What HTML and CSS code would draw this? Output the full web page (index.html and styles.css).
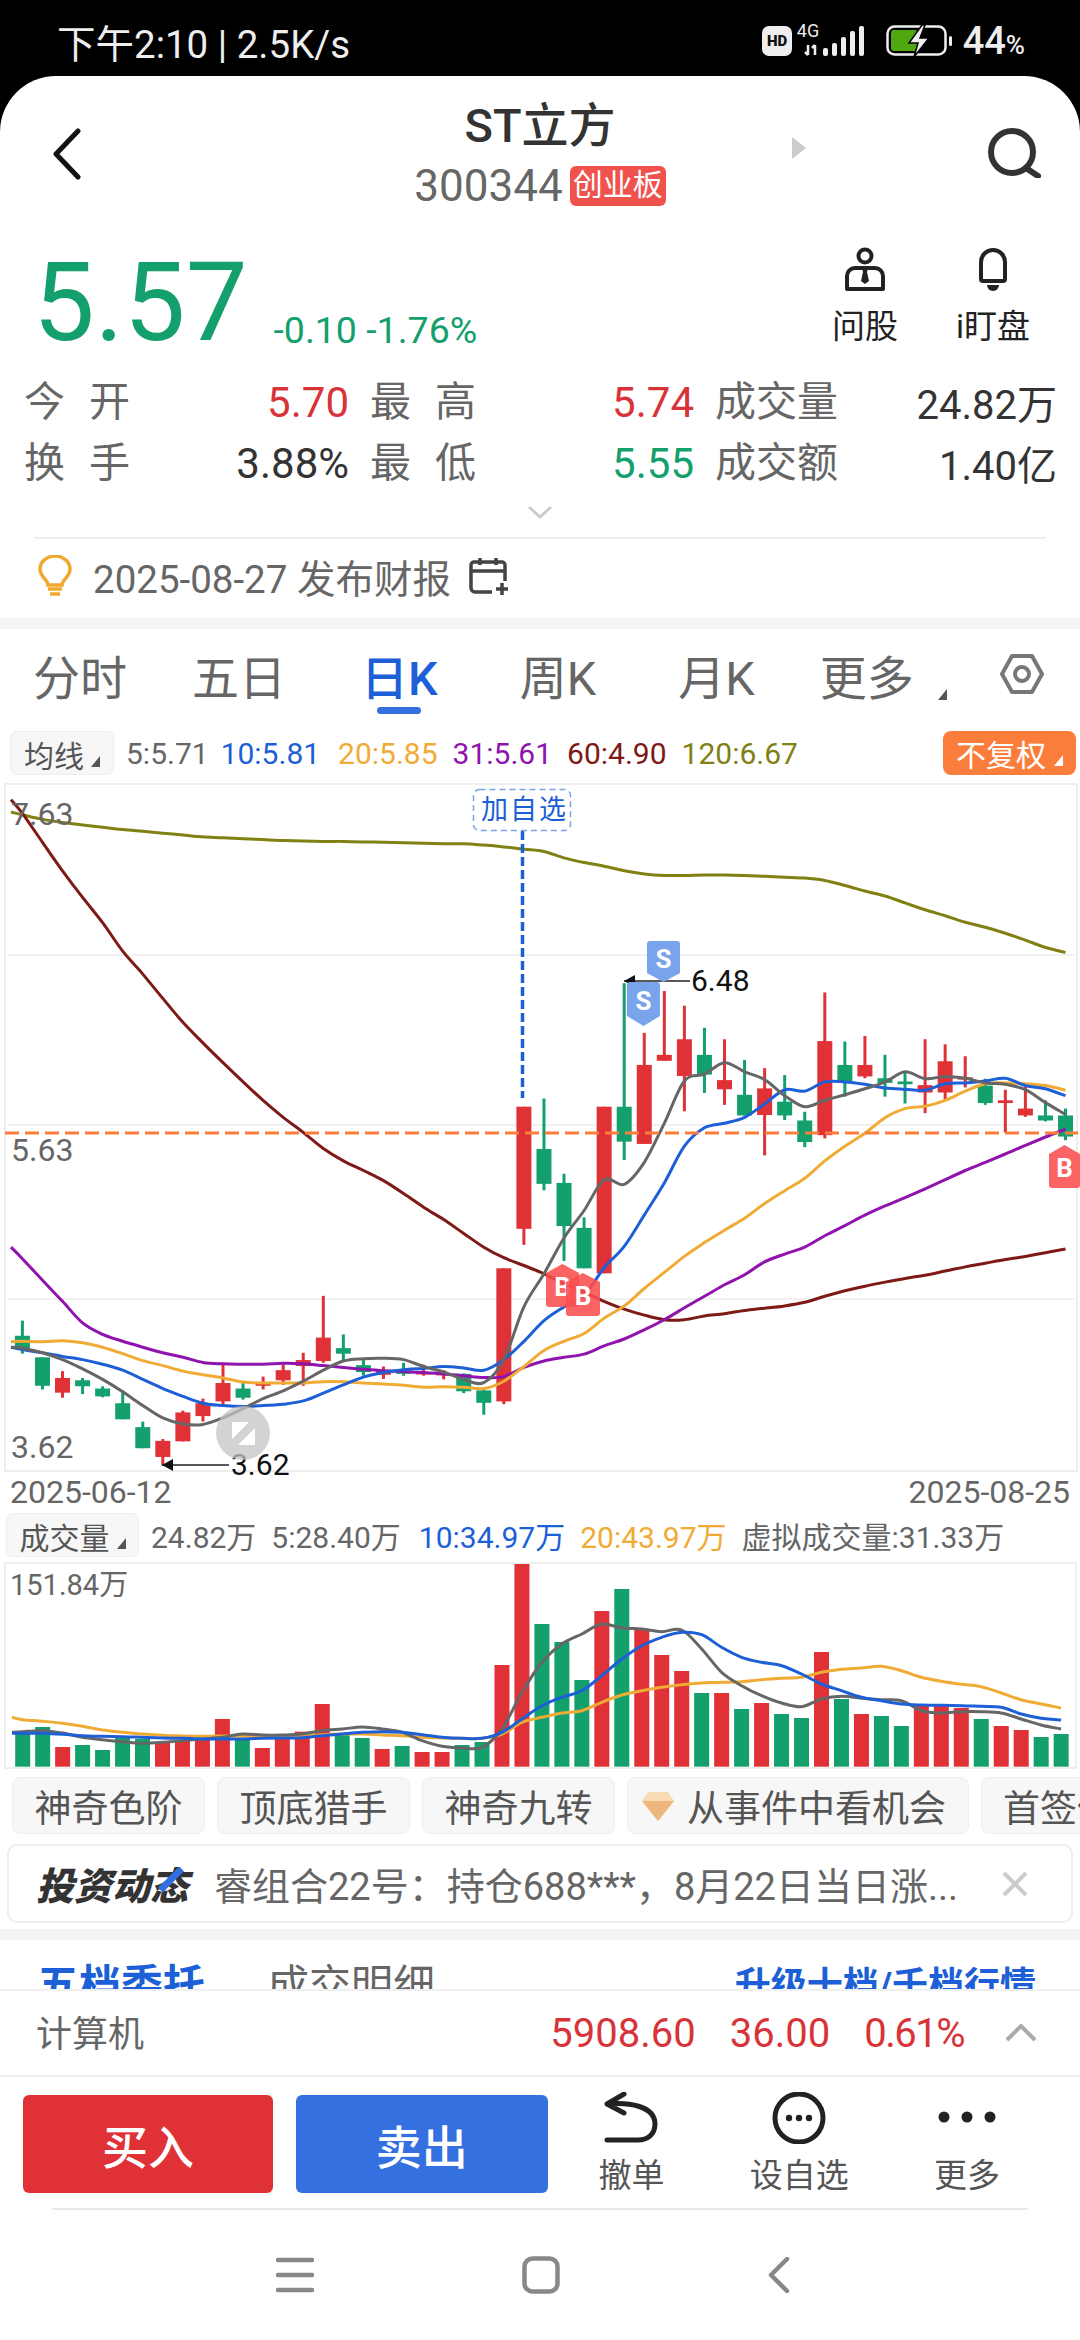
FILE: index.html
```html
<!DOCTYPE html>
<html lang="zh-CN">
<head>
    <meta charset="UTF-8">
    <meta name="viewport" content="width=device-width, initial-scale=1.0">
    <title>ST立方 300344</title>
    <link rel="stylesheet" href="styles.css">
</head>
<body>
<div class="phone">
    <!-- status bar -->
    <div class="status">
        <span class="status-time">下午2:10 | 2.5K/s</span>
        <div class="status-icons">
            <svg class="ic-net" viewBox="0 0 110 40" width="110" height="40">
                <rect x="0" y="5" width="30" height="30" rx="7" class="s-fill"/>
                <text x="15" y="25" class="hd">HD</text>
                <text x="46" y="16" class="g4">4G</text>
                <path d="M46 24v10M43 31l3 3M53 34V24M50 27l3-3" class="s-line"/>
                <rect x="61" y="27" width="5" height="8" rx="2" class="s-fill"/>
                <rect x="70" y="22" width="5" height="13" rx="2" class="s-fill"/>
                <rect x="79" y="16" width="5" height="19" rx="2" class="s-fill"/>
                <rect x="88" y="10" width="5" height="25" rx="2" class="s-fill"/>
                <rect x="97" y="5" width="5" height="30" rx="2" class="s-fill"/>
            </svg>
            <svg class="ic-batt" viewBox="0 0 68 32" width="68" height="32">
                <rect x="1.5" y="1.5" width="58" height="28" rx="7" class="s-line"/>
                <rect x="5" y="5" width="27" height="21" rx="3" class="batt-fill"/>
                <rect x="63" y="11" width="3" height="10" rx="1.5" class="s-fill"/>
                <path d="M36 0L23 18h9l-4 14 15-19h-9l5-13z" class="batt-bolt"/>
            </svg>
            <span class="status-pct">44<small>%</small></span>
        </div>
    </div>

    <div class="sheet">
        <!-- title -->
        <div class="topbar">
            <div class="top-left">
                <svg viewBox="0 0 29 52" width="29" height="52"><path d="M26 3L4 26l22 23" class="ic-back"/></svg>
            </div>
            <div class="top-mid">
                <div class="stock-name">ST立方</div>
                <div class="stock-code"><span>300344</span><em class="board">创业板</em></div>
            </div>
            <div class="top-right">
                <i class="tri-next"></i>
                <svg viewBox="0 0 56 50" width="56" height="50"><circle cx="26" cy="24" r="21" class="ic-search"/><path d="M40 40l12 8" class="ic-search"/></svg>
            </div>
        </div>

        <!-- price -->
        <div class="quote">
            <div class="price">5.57</div>
            <div class="change">-0.10 -1.76%</div>
            <div class="quote-act first">
                <svg viewBox="0 0 42 44" width="42" height="44">
                    <circle cx="21" cy="9" r="6.5" class="ic-dark"/>
                    <path d="M3 42V29a8 8 0 0 1 8-8h20a8 8 0 0 1 8 8v13z" class="ic-dark"/>
                    <path d="M18 21h6l-1 4 2 9-4 3-4-3 2-9z" class="ic-solid"/>
                </svg>
                <span>问股</span>
            </div>
            <div class="quote-act">
                <svg viewBox="0 0 34 44" width="34" height="44">
                    <path d="M5 32V15a12 12 0 0 1 24 0v17a2 2 0 0 1-2 2H7a2 2 0 0 1-2-2z" class="ic-dark"/>
                    <path d="M11 38h12a6 6 0 0 1-12 0z" class="ic-solid"/>
                </svg>
                <span>i盯盘</span>
            </div>
        </div>

        <!-- stats -->
        <div class="stats">
            <div class="stat"><label class="wide">今开</label><b class="rise-t">5.70</b></div>
            <div class="stat"><label class="wide">最高</label><b class="rise-t">5.74</b></div>
            <div class="stat"><label>成交量</label><b class="total">24.82万</b></div>
            <div class="stat"><label class="wide">换手</label><b>3.88%</b></div>
            <div class="stat"><label class="wide">最低</label><b class="fall-t">5.55</b></div>
            <div class="stat"><label>成交额</label><b class="total">1.40亿</b></div>
        </div>
        <div class="expand">
            <svg viewBox="0 0 26 14" width="26" height="14"><path d="M2 2l11 10L24 2" class="ic-pale"/></svg>
        </div>
        <div class="rule"></div>

        <!-- earnings notice -->
        <div class="notice">
            <svg viewBox="0 0 34 42" width="34" height="42">
                <path d="M10 30c0-5-8-8-8-16a15 13 0 0 1 30 0c0 8-8 11-8 16z" class="ic-bulb"/>
                <path d="M10 34h14M12 39h10" class="ic-bulb"/>
            </svg>
            <span>2025-08-27 发布财报</span>
            <svg viewBox="0 0 40 38" width="40" height="38">
                <path d="M24 35H7a4 4 0 0 1-4-4V8a3 3 0 0 1 3-3h28a3 3 0 0 1 3 3v16M3 14h34M12 1v7M28 1v7M34 26v12M28 32h12" class="ic-cal"/>
            </svg>
        </div>
        <div class="band"></div>

        <!-- period tabs -->
        <div class="tabs">
            <span class="tab">分时</span>
            <span class="tab tight">五日</span>
            <span class="tab on">日K</span>
            <span class="tab">周K</span>
            <span class="tab">月K</span>
            <span class="tab tight">更多</span>
            <i class="tri tab-tri"></i>
            <svg class="tab-set" viewBox="0 0 44 42" width="44" height="42">
                <path d="M12 3h20l10 18-10 18H12L2 21z" class="ic-gear"/>
                <circle cx="22" cy="21" r="7" class="ic-gear"/>
            </svg>
        </div>

        <!-- moving average legend -->
        <div class="ma-row">
            <button class="mini-btn">均线<i class="tri"></i></button>
            <span class="ma-v c5">5:5.71</span>
            <span class="ma-v c10">10:5.81</span>
            <span class="ma-v c20">20:5.85</span>
            <span class="ma-v c31">31:5.61</span>
            <span class="ma-v c60">60:4.90</span>
            <span class="ma-v c120">120:6.67</span>
            <button class="fq-btn">不复权<i class="tri"></i></button>
        </div>

        <svg id="kline" class="kline" width="1080" height="696"></svg>
        <div class="dates"><span>2025-06-12</span><span>2025-08-25</span></div>

        <!-- volume -->
        <div class="vol-head">
            <button class="mini-btn wide-btn">成交量<i class="tri"></i></button>
            <span class="c5">24.82万</span>
            <span class="c5">5:28.40万</span>
            <span class="c10">10:34.97万</span>
            <span class="c20">20:43.97万</span>
            <span class="c5">虚拟成交量:31.33万</span>
        </div>
        <svg id="volume" class="volume" width="1080" height="212"></svg>

        <!-- feature chips -->
        <div class="chips">
            <span class="chip">神奇色阶</span>
            <span class="chip">顶底猎手</span>
            <span class="chip">神奇九转</span>
            <span class="chip chip-gem">
                <svg viewBox="0 0 34 30" width="34" height="30">
                    <path d="M7 1h20l6 9-16 20L1 10z" class="gem-a"/>
                    <path d="M1 10h32L17 30z" class="gem-b"/>
                </svg>
                从事件中看机会
            </span>
            <span class="chip">首签保</span>
        </div>

        <!-- news strip -->
        <div class="news">
            <span class="news-logo">投资动态</span>
            <span class="news-text">睿组合22号：持仓688***，8月22日当日涨...</span>
            <svg viewBox="0 0 26 26" width="26" height="26"><path d="M2 2l22 22M24 2L2 24" class="ic-close"/></svg>
        </div>
        <div class="band band-low"></div>

        <div class="book">
            <span class="book-on">五档委托</span>
            <span class="book-off">成交明细</span>
            <span class="book-up">升级十档/千档行情</span>
        </div>

        <div class="sector">
            <span class="sector-name">计算机</span>
            <span class="sector-v">5908.60</span>
            <span class="sector-v">36.00</span>
            <span class="sector-v">0.61%</span>
            <svg viewBox="0 0 32 18" width="32" height="18"><path d="M2 16L16 2l14 14" class="ic-up"/></svg>
        </div>

        <div class="trade">
            <button class="trade-btn buy">买入</button>
            <button class="trade-btn sell">卖出</button>
            <div class="act">
                <svg viewBox="0 0 54 52" width="54" height="52"><path d="M20 2L3 12l17 9M3 12c22-2 48 2 48 20 0 11-8 16-17 16H3" class="ic-act"/></svg>
                <span>撤单</span>
            </div>
            <div class="act">
                <svg viewBox="0 0 54 52" width="54" height="52">
                    <circle cx="27" cy="26" r="24" class="ic-act"/>
                    <circle cx="17" cy="26" r="3.2" class="ic-solid"/><circle cx="27" cy="26" r="3.2" class="ic-solid"/><circle cx="37" cy="26" r="3.2" class="ic-solid"/>
                </svg>
                <span>设自选</span>
            </div>
            <div class="act">
                <svg viewBox="0 0 58 52" width="58" height="52">
                    <circle cx="6" cy="25" r="5.5" class="ic-solid"/><circle cx="29" cy="25" r="5.5" class="ic-solid"/><circle cx="52" cy="25" r="5.5" class="ic-solid"/>
                </svg>
                <span>更多</span>
            </div>
        </div>
        <div class="rule rule-foot"></div>

        <!-- system navigation -->
        <div class="sysnav">
            <svg viewBox="0 0 38 36" width="38" height="36"><path d="M2 3h34M2 18h34M2 33h34" class="ic-nav"/></svg>
            <svg viewBox="0 0 38 38" width="38" height="38"><rect x="2.5" y="2.5" width="33" height="33" rx="8" class="ic-nav"/></svg>
            <svg viewBox="0 0 22 36" width="22" height="36"><path d="M19 2L3 18l16 16" class="ic-nav"/></svg>
        </div>
    </div>
</div>
<script src="chart.js"></script>
</body>
</html>
```

FILE: styles.css
```css
* {
    box-sizing: border-box;
}
html, body {
    margin: 0;
    padding: 0;
}
body {
    background: #000;
    font-family: Roboto, "Noto Sans CJK SC", sans-serif;
}
button {
    font-family: inherit;
    border: 0;
    padding: 0;
}
.phone {
    width: 1080px;
    height: 2340px;
    overflow: hidden;
    background: #000;
}

/* status bar */
.status {
    height: 76px;
    padding: 6px 55px 0 57px;
    display: flex;
    justify-content: space-between;
    align-items: center;
    color: #eee;
}
.status-time {
    font-size: 38.5px;
    white-space: nowrap;
}
.status-icons {
    display: flex;
    align-items: center;
}
.ic-batt {
    margin-left: 14px;
}
.status-pct {
    margin-left: 9px;
    font-size: 38px;
    font-weight: 500;
}
.status-pct small {
    font-size: 26px;
}
.s-fill {
    fill: #eee;
}
.s-line {
    fill: none;
    stroke: #eee;
    stroke-width: 2.5;
}
.hd {
    font-size: 15px;
    font-weight: 900;
    text-anchor: middle;
    fill: #111;
}
.g4 {
    font-size: 18px;
    text-anchor: middle;
    fill: #eee;
}
.batt-fill {
    fill: #4fa80f;
}
.batt-bolt {
    fill: #eee;
    stroke: #000;
    stroke-width: 1.5;
}

.sheet {
    background: #fff;
    border-radius: 56px 56px 0 0;
    height: 2264px;
}

/* title */
.topbar {
    height: 154px;
    display: grid;
    grid-template-columns: 1fr auto 1fr;
}
.top-left {
    padding: 52px 0 0 52px;
}
.top-mid {
    text-align: center;
    padding-top: 24px;
}
.stock-name {
    font-size: 47px;
    line-height: 52px;
    font-weight: 500;
    color: #333;
}
.stock-code {
    margin-top: 14px;
    display: flex;
    align-items: center;
    height: 40px;
    font-size: 44px;
    color: #666;
}
.board {
    margin-left: 7px;
    width: 96px;
    height: 40px;
    line-height: 38px;
    text-align: center;
    background: #f0534e;
    border-radius: 6px;
    color: #fff;
    font-size: 30px;
    font-style: normal;
}
.top-right {
    display: flex;
    justify-content: flex-end;
    padding: 52px 38px 0 0;
}
.tri-next {
    width: 0;
    height: 0;
    margin: 9px 180px 0 0;
    border-left: 14px solid #ccc;
    border-top: 11px solid transparent;
    border-bottom: 11px solid transparent;
}
.ic-back {
    fill: none;
    stroke: #111;
    stroke-width: 5;
    stroke-linecap: round;
    stroke-linejoin: round;
}
.ic-search {
    fill: none;
    stroke: #333;
    stroke-width: 6;
    stroke-linecap: round;
}

/* price */
.quote {
    height: 137px;
    padding: 18px 48px 0 33px;
    display: flex;
    align-items: flex-start;
}
.price {
    font-size: 110px;
    line-height: 110px;
    color: #14a06c;
}
.change {
    margin: 61px 0 0 26px;
    font-size: 37.5px;
    line-height: 42px;
    color: #14a06c;
    white-space: nowrap;
}
.quote-act {
    display: flex;
    flex-direction: column;
    align-items: center;
    width: 78px;
    margin-left: 50px;
    margin-top: -1px;
    font-size: 33px;
    color: #222;
    white-space: nowrap;
}
.quote-act.first {
    margin-left: auto;
}
.quote-act span {
    line-height: 44px;
    margin-top: 14px;
}
.ic-dark {
    fill: none;
    stroke: #222;
    stroke-width: 4;
    stroke-linejoin: round;
}
.ic-solid {
    fill: #222;
}

/* stats */
.stats {
    padding-left: 24px;
    display: grid;
    grid-template-columns: 325px 324px 342px;
    grid-auto-rows: 61px;
    column-gap: 21px;
    font-size: 41px;
}
.stat {
    display: flex;
    justify-content: space-between;
    align-items: center;
}
.stat label {
    color: #666;
}
.stat label.wide {
    letter-spacing: 24px;
}
.stat b {
    padding-top: 10px;
    font-weight: 400;
    font-size: 42px;
    color: #333;
}
.stat b.rise-t {
    color: #d9333a;
}
.stat b.fall-t {
    color: #14a06c;
}
.stat b.total {
    font-size: 40px;
    padding-top: 8px;
}
.expand {
    height: 48px;
    padding-top: 15px;
    text-align: center;
}
.ic-pale {
    fill: none;
    stroke: #ccc;
    stroke-width: 3;
}
.rule {
    height: 2px;
    margin: 0 34px;
    background: #eee;
}

/* notice */
.notice {
    height: 79px;
    padding: 0 0 5px 38px;
    display: flex;
    align-items: center;
    font-size: 38.5px;
    color: #666;
}
.notice span {
    margin: 0 17px 0 21px;
}
.ic-bulb {
    fill: none;
    stroke: #f0a92e;
    stroke-width: 3.5;
}
.ic-cal {
    fill: none;
    stroke: #444;
    stroke-width: 3.5;
}
.band {
    height: 11px;
    background: #f4f4f4;
}

/* tabs */
.tabs {
    height: 102px;
    padding: 23px 36px 0 33px;
    display: flex;
    align-items: flex-start;
    font-size: 47px;
    line-height: 54px;
    color: #666;
}
.tab {
    position: relative;
    margin-left: 82px;
    white-space: nowrap;
}
.tab:first-child {
    margin-left: 0;
}
.tab.tight {
    margin-left: 65px;
}
.tab.on {
    margin-left: 75px;
    color: #1d5fd6;
    font-weight: 500;
}
.tab.on::after {
    content: "";
    position: absolute;
    left: 16px;
    width: 44px;
    top: 55px;
    height: 7px;
    border-radius: 4px;
    background: #3570e0;
}
.tri {
    display: inline-block;
    width: 0;
    height: 0;
    border-right: 9px solid currentColor;
    border-top: 11px solid transparent;
}
.tab-tri {
    margin: 37px 0 0 24px;
    color: #555;
}
.tab-set {
    margin: 1px 0 0 auto;
}
.ic-gear {
    fill: none;
    stroke: #777;
    stroke-width: 4;
    stroke-linejoin: round;
}

/* legend */
.ma-row {
    height: 44px;
    padding: 0 4px 0 10px;
    display: flex;
    align-items: center;
    font-size: 30px;
}
.mini-btn {
    width: 104px;
    height: 44px;
    background: #f7f7f7;
    border: 1px solid #eee;
    border-radius: 7px;
    font-size: 30px;
    color: #555;
}
.mini-btn .tri {
    margin-left: 7px;
    color: #555;
}
.wide-btn {
    width: 133px;
    margin-right: -3px;
}
.ma-v {
    margin-left: 15px;
    white-space: nowrap;
}
.ma-v.c5,
.ma-v.c10 {
    margin-left: 12px;
}
.ma-v.c20 {
    margin-left: 18px;
}
.vol-head .c10 {
    margin-left: 3px;
}
.c5 {
    color: #666;
}
.c10 {
    color: #1d5fd6;
}
.c20 {
    color: #f0ab35;
}
.c31 {
    color: #9013ae;
}
.c60 {
    color: #7e1a16;
}
.c120 {
    color: #808013;
}
.fq-btn {
    margin-left: auto;
    width: 133px;
    height: 44px;
    background: #fb7d3c;
    border-radius: 8px;
    font-size: 30px;
    color: #fff;
}
.fq-btn .tri {
    margin-left: 8px;
    color: #fff;
}

/* charts */
.kline {
    display: block;
    margin-top: 4px;
    overflow: visible;
}
.volume {
    display: block;
    margin-top: 3px;
}
.frame {
    fill: none;
    stroke: #eee;
    stroke-width: 2;
}
.grid {
    stroke: #f1f1f1;
    stroke-width: 2;
}
.rise {
    fill: #e03137;
}
.fall {
    fill: #14a06c;
}
.ma {
    fill: none;
    stroke-width: 3;
    stroke-linejoin: round;
}
.m5 {
    stroke: #666;
}
.m10 {
    stroke: #1d5fd6;
}
.m20 {
    stroke: #f0ab35;
}
.m31 {
    stroke: #9013ae;
}
.m60 {
    stroke: #7e1a16;
}
.m120 {
    stroke: #808013;
}
.last-price {
    stroke: #fb7d3c;
    stroke-width: 3;
    stroke-dasharray: 14 6;
}
.pin-line {
    stroke: #1d5fd6;
    stroke-width: 3.5;
    stroke-dasharray: 9 4;
}
.pin-box {
    fill: #fff;
    stroke: #7ba3e6;
    stroke-width: 1.5;
    stroke-dasharray: 6 4;
}
.pin-text {
    font-size: 27px;
    letter-spacing: 2px;
    fill: #1d5fd6;
}
.axis {
    font-size: 32px;
    fill: #666;
}
.axis.small {
    font-size: 29px;
}
.mark {
    font-size: 30px;
    fill: #111;
}
.mark-line {
    stroke: #222;
    stroke-width: 1.5;
}
.mark-head {
    fill: #111;
}
.sell-pin {
    fill: #79a4ec;
}
.buy-pin {
    fill: #f94f50;
    fill-opacity: .88;
}
.pin-letter {
    font-size: 26px;
    font-weight: 700;
    fill: #fff;
    text-anchor: middle;
}
.flag-disc {
    fill: #c4c4c4;
    fill-opacity: .75;
}
.flag-in {
    fill: #fff;
}
.dates {
    height: 34px;
    padding: 0 10px;
    display: flex;
    justify-content: space-between;
    font-size: 32px;
    line-height: 34px;
    color: #666;
}
.vol-head {
    height: 43px;
    margin-top: 4px;
    padding-left: 6px;
    display: flex;
    align-items: center;
    gap: 15px;
    font-size: 30px;
    white-space: nowrap;
}

/* chips */
.chips {
    margin-top: 6px;
    padding-left: 12px;
    height: 57px;
    display: flex;
    gap: 12px;
    overflow: hidden;
}
.chip {
    flex: none;
    padding: 0 21.5px;
    display: flex;
    align-items: center;
    background: #f7f7f7;
    border: 1px solid #eee;
    border-radius: 8px;
    font-size: 37px;
    color: #555;
    white-space: nowrap;
}
.chip-gem {
    padding-left: 13px;
}
.chip-gem svg {
    margin-right: 12px;
}
.gem-a {
    fill: #f7dcb4;
}
.gem-b {
    fill: #eeb77e;
}

/* news strip */
.news {
    height: 79px;
    margin: 10px 7px 0;
    padding: 0 43px 0 27px;
    display: flex;
    align-items: center;
    border: 2px solid #eee;
    border-radius: 10px;
}
.news-logo {
    position: relative;
    font-size: 38px;
    font-weight: 900;
    font-style: italic;
    color: #333;
    white-space: nowrap;
}
.news-logo::after {
    content: "";
    position: absolute;
    left: 120px;
    top: 20px;
    width: 30px;
    height: 7px;
    background: #2f6fe0;
    transform: rotate(-45deg);
}
.news-text {
    flex: 1;
    margin-left: 26px;
    font-size: 38px;
    color: #666;
    white-space: nowrap;
}
.ic-close {
    fill: none;
    stroke: #ccc;
    stroke-width: 4;
}
.band-low {
    margin-top: 6px;
}

/* order book tabs */
.book {
    height: 49px;
    padding: 20px 44px 0 37px;
    display: flex;
    overflow: hidden;
    font-size: 42px;
    line-height: 52px;
    white-space: nowrap;
}
.book-on {
    color: #1d5fd6;
    font-weight: 700;
}
.book-off {
    margin-left: 62px;
    color: #666;
}
.book-up {
    margin-left: auto;
    font-size: 36px;
    font-weight: 700;
    color: #1d5fd6;
}

/* sector bar */
.sector {
    height: 88px;
    padding: 0 43px 0 36px;
    display: flex;
    align-items: center;
    border-top: 2px solid #f0f0f0;
    border-bottom: 2px solid #f0f0f0;
    font-size: 40px;
}
.sector-name {
    flex: 1;
    padding-bottom: 4px;
    font-size: 36px;
    color: #666;
}
.sector-v {
    margin-right: 34px;
    color: #d9333a;
}
.sector-v:nth-child(4) {
    margin-right: 41px;
    letter-spacing: -1.5px;
}
.ic-up {
    fill: none;
    stroke: #aaa;
    stroke-width: 4;
}

/* trade buttons */
.trade {
    height: 131px;
    padding: 18px 29px 0 23px;
    display: flex;
    align-items: flex-start;
}
.trade-btn {
    height: 98px;
    border-radius: 6px;
    font-size: 46px;
    font-weight: 500;
    color: #fff;
}
.buy {
    width: 250px;
    background: #e03137;
}
.sell {
    width: 252px;
    margin-left: 23px;
    background: #3570e0;
}
.act {
    width: 168px;
    margin-top: -3px;
    display: flex;
    flex-direction: column;
    align-items: center;
    font-size: 33px;
    color: #555;
}
.act span {
    margin-top: 10px;
    line-height: 44px;
}
.ic-act {
    fill: none;
    stroke: #222;
    stroke-width: 5;
    stroke-linecap: round;
    stroke-linejoin: round;
}
.rule-foot {
    margin: 0 52px;
    background: #e8e8e8;
}

/* system navigation */
.sysnav {
    padding: 46px 0 0 276px;
    display: flex;
    align-items: center;
    gap: 208px;
}
.ic-nav {
    fill: none;
    stroke: #888;
    stroke-width: 4.5;
    stroke-linecap: round;
    stroke-linejoin: round;
}
```

FILE: chart.js
```js
var NS = "http://www.w3.org/2000/svg";

// helper: add one svg element with attributes, optional text
function add(parent, tag, attrs, text) {
    var node = document.createElementNS(NS, tag);
    for (var k in attrs) {
        node.setAttribute(k, attrs[k]);
    }
    if (text) {
        node.textContent = text;
    }
    parent.appendChild(node);
    return node;
}

// smooth line through the points (catmull-rom to bezier)
function smooth(pts) {
    var d = "M" + pts[0][0] + " " + pts[0][1];
    for (var i = 0; i < pts.length - 1; i++) {
        var p0 = pts[i - 1] || pts[i];
        var p1 = pts[i];
        var p2 = pts[i + 1];
        var p3 = pts[i + 2] || p2;
        var c1x = p1[0] + (p2[0] - p0[0]) / 6;
        var c1y = p1[1] + (p2[1] - p0[1]) / 6;
        var c2x = p2[0] - (p3[0] - p1[0]) / 6;
        var c2y = p2[1] - (p3[1] - p1[1]) / 6;
        d += "C" + c1x.toFixed(1) + " " + c1y.toFixed(1) + " " + c2x.toFixed(1) + " " + c2y.toFixed(1) + " " + p2[0].toFixed(1) + " " + p2[1].toFixed(1);
    }
    return d;
}

/* ---------- K line ---------- */
var kline = document.getElementById("kline");
var KY = 0.459;               // data row -> svg y
var KX0 = 22.4, KDX = 20.06;  // first candle, candle pitch

function kx(i) {
    return KX0 + KDX * i;
}

// [rise?, wick top, wick bottom, body top, body bottom]
var candles = [
    [0,1180,1252,1213,1240],[0,1260,1330,1260,1322],[1,1290,1348,1305,1337],[0,1305,1340,1310,1323],
    [0,1323,1347,1328,1345],[0,1332,1395,1360,1395],[0,1400,1458,1412,1458],[1,1438,1495,1442,1477],
    [1,1376,1443,1380,1443],[1,1350,1400,1360,1388],[1,1272,1362,1316,1356],[0,1316,1352,1328,1348],
    [1,1302,1330,1317,1322],[1,1275,1320,1288,1310],[1,1250,1322,1266,1279],[1,1126,1272,1217,1268],
    [0,1210,1268,1240,1252],[0,1265,1300,1277,1292],[1,1280,1307,1288,1298],[0,1272,1300,1288,1296],
    [1,1276,1300,1293,1297],[1,1288,1308,1295,1298],[0,1295,1338,1296,1334],[0,1330,1385,1332,1359],
    [1,1066,1362,1066,1356],[1,714,1015,714,980],[0,696,896,806,882],[0,860,1050,880,974],
    [0,955,1066,978,1066],[1,714,1077,714,1077],[0,445,830,714,790],[1,553,795,623,795],
    [1,462,614,601,614],[1,494,724,567,647],[0,542,684,601,644],[1,567,710,656,676],
    [0,612,733,688,733],[1,630,820,674,732],[0,645,743,703,733],[0,725,802,744,791],
    [1,465,783,571,776],[0,572,692,623,658],[1,560,652,623,648],[0,601,692,652,662],
    [0,640,707,659,665],[1,567,728,667,683],[1,578,698,615,683],[1,604,672,650,655],
    [0,653,710,668,706],[1,677,770,700,706],[1,670,736,718,733],[0,700,746,733,744],
    [0,718,787,733,779]
];

// one value before the first candle, then one per candle
var lines = {
    m120: [72,78,88,95,100,105,110,114,118,122,126,128,130,132,134,135,136,136,137,138,139,140,141,141,144,148,153,158,172,182,190,200,207,210,210,209,209,210,212,214,216,221,232,244,255,270,285,298,312,323,336,351,367,378],
    m60: [45,75,138,200,258,313,375,425,478,530,575,618,660,700,737,770,805,832,853,875,903,933,960,990,1020,1043,1060,1078,1100,1118,1138,1155,1168,1178,1178,1170,1165,1158,1153,1148,1140,1127,1115,1105,1096,1088,1081,1072,1063,1055,1047,1040,1032,1024],
    m31: [1020,1045,1092,1138,1185,1210,1225,1238,1250,1260,1271,1274,1275,1275,1273,1274,1278,1282,1286,1289,1291,1293,1296,1300,1304,1302,1282,1268,1260,1253,1235,1220,1200,1178,1152,1127,1102,1080,1052,1035,1020,995,973,950,930,912,893,873,853,835,817,798,780,763],
    m20: [1226,1225,1226,1224,1228,1238,1252,1267,1278,1290,1298,1305,1314,1316,1316,1316,1313,1313,1316,1318,1321,1325,1324,1325,1328,1312,1280,1245,1225,1208,1175,1148,1110,1075,1040,1010,983,957,925,897,870,832,800,772,738,718,713,700,680,664,662,664,668,678],
    m10: [1238,1243,1250,1258,1265,1275,1288,1308,1328,1345,1360,1365,1367,1365,1362,1355,1338,1320,1303,1293,1287,1284,1280,1283,1288,1265,1225,1180,1150,1125,1065,1018,950,880,800,760,750,737,708,677,680,660,660,665,673,676,678,664,662,658,652,668,675,690],
    m5: [1238,1240,1250,1265,1285,1308,1335,1365,1392,1405,1406,1392,1372,1350,1333,1312,1288,1268,1263,1262,1265,1280,1292,1308,1315,1265,1150,1078,1000,940,873,883,835,750,658,643,618,638,655,690,714,700,688,675,660,638,653,648,652,662,665,677,705,731]
};

add(kline, "rect", {x: 5, y: 5, width: 1072, height: 687, "class": "frame"});
[176, 346, 520].forEach(function (y) {
    add(kline, "line", {x1: 8, x2: 1074, y1: y, y2: y, "class": "grid"});
});

candles.forEach(function (c, i) {
    var x = kx(i);
    var cls = c[0] ? "rise" : "fall";
    add(kline, "rect", {x: x - 1.5, y: c[1] * KY, width: 3, height: (c[2] - c[1]) * KY, "class": cls});
    add(kline, "rect", {x: x - 7.5, y: c[3] * KY, width: 15, height: Math.max((c[4] - c[3]) * KY, 2), "class": cls});
});

Object.keys(lines).forEach(function (name) {
    var pts = lines[name].map(function (v, i) {
        return [i === 0 ? 11 : kx(i - 1), v * KY];
    });
    add(kline, "path", {d: smooth(pts), "class": "ma " + name});
});

// last close line and axis labels
add(kline, "line", {x1: 5, x2: 1078, y1: 354, y2: 354, "class": "last-price"});
add(kline, "text", {x: 11, y: 46, "class": "axis"}, "7.63");
add(kline, "text", {x: 11, y: 382, "class": "axis"}, "5.63");
add(kline, "text", {x: 11, y: 679, "class": "axis"}, "3.62");

// add-to-watchlist pin
add(kline, "line", {x1: 522.5, x2: 522.5, y1: 52, y2: 319, "class": "pin-line"});
add(kline, "rect", {x: 473.5, y: 10.5, width: 97, height: 41, rx: 6, "class": "pin-box"});
add(kline, "text", {x: 481, y: 40, "class": "pin-text"}, "加自选");

// high / low marks
function mark(x1, x2, y, label, tx) {
    add(kline, "line", {x1: x1, x2: x2, y1: y, y2: y, "class": "mark-line"});
    add(kline, "path", {d: "M" + x1 + " " + y + "l11-6v12z", "class": "mark-head"});
    add(kline, "text", {x: tx, y: y + 10, "class": "mark"}, label);
}
mark(624, 690, 202, "6.48", 691);
mark(162, 229, 686, "3.62", 231);

// S points down, B points up
function pin(x, y, w, h, letter, down) {
    var a = Math.round(h * 0.22);
    var d = down
        ? "M" + (x + 3) + " " + y + "h" + (w - 6) + "q3 0 3 3v" + (h - a - 3) + "l-" + (w / 2) + " " + a + "l-" + (w / 2) + " -" + a + "v-" + (h - a - 3) + "q0-3 3-3z"
        : "M" + (x + w / 2) + " " + y + "l" + (w / 2) + " " + a + "v" + (h - a - 3) + "q0 3-3 3h-" + (w - 6) + "q-3 0-3-3v-" + (h - a - 3) + "z";
    add(kline, "path", {d: d, "class": down ? "sell-pin" : "buy-pin"});
    add(kline, "text", {x: x + w / 2, y: y + h / 2 + (down ? 6 : 10), "class": "pin-letter"}, letter);
}
pin(647, 162, 33, 41, "S", true);
pin(627, 203, 33, 44, "S", true);
pin(546, 485, 33, 43, "B", false);
pin(566, 494, 34, 43, "B", false);
pin(1049, 366, 31, 43, "B", false);

// drawing-tool toggle on the chart
add(kline, "circle", {cx: 243, cy: 654, r: 27, "class": "flag-disc"});
add(kline, "path", {d: "M232 643h17l-17 17zM255 649v17h-17z", "class": "flag-in"});

/* ---------- volume ---------- */
var volume = document.getElementById("volume");
var VX0 = 22.7, VDX = 19.97;

function vy(v) {
    return v / 3 - 70;
}

// bar top per day, colours follow the candle of that day
var bars = [735,714,774,768,783,745,750,762,755,750,690,750,777,748,728,645,738,747,780,771,789,789,768,759,528,225,405,459,573,366,300,420,498,546,612,612,660,642,675,687,489,630,675,681,711,651,651,657,690,711,723,744,735];
var rises = [0,0,1,0,0,0,0,1,1,1,1,0,1,1,1,1,0,0,1,0,1,1,0,0,1,1,0,0,0,1,0,1,1,1,0,1,0,1,0,0,1,0,1,0,0,1,1,1,0,1,1,0,0];

var volLines = {
    m20: [685,692,697,703,712,723,730,735,739,741,742,741,741,743,743,742,737,735,735,738,740,745,747,748,748,735,700,685,672,665,640,618,605,595,587,582,580,578,572,568,565,550,541,537,532,545,565,577,586,593,612,632,645,657],
    m5: [730,728,725,732,745,752,758,763,760,755,750,745,735,738,738,735,725,720,714,720,730,755,772,777,775,720,610,520,465,435,405,417,420,428,423,480,550,590,620,642,653,630,622,628,632,635,665,672,668,668,672,690,708,720],
    m10: [733,733,733,736,740,742,743,745,747,748,750,750,750,748,747,746,740,735,730,728,730,737,745,748,748,730,690,650,625,605,560,510,470,445,430,437,475,505,520,530,555,585,605,625,635,645,648,649,650,652,655,675,688,693]
};

add(volume, "rect", {x: 5, y: 4, width: 1071, height: 205, "class": "frame"});
bars.forEach(function (top, i) {
    add(volume, "rect", {
        x: VX0 + VDX * i - 7.5,
        y: vy(top),
        width: 15,
        height: vy(833) - vy(top),
        "class": rises[i] ? "rise" : "fall"
    });
});
["m20", "m5", "m10"].forEach(function (name) {
    var pts = volLines[name].map(function (v, i) {
        return [i === 0 ? 12 : VX0 + VDX * (i - 1), vy(v)];
    });
    add(volume, "path", {d: smooth(pts), "class": "ma " + name});
});
add(volume, "text", {x: 10, y: 36, "class": "axis small"}, "151.84万");
```
